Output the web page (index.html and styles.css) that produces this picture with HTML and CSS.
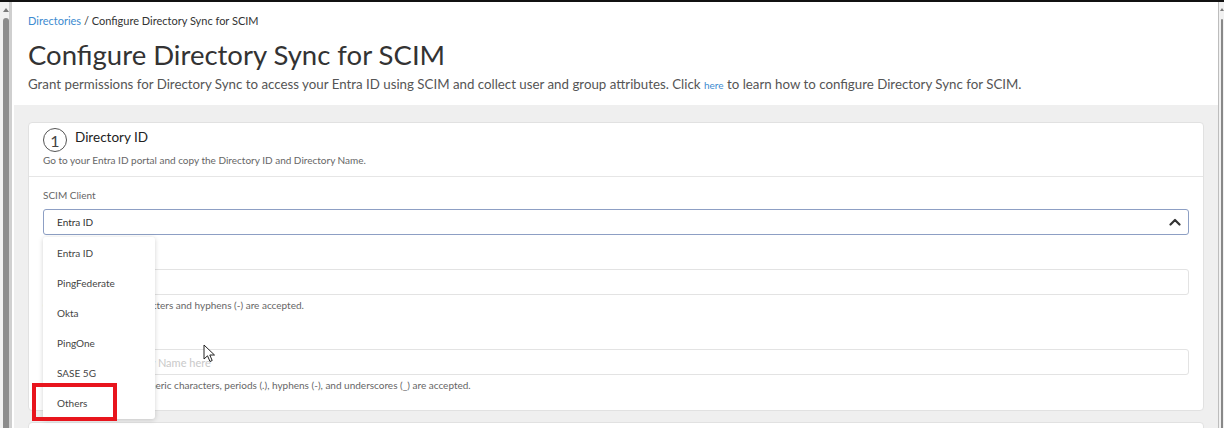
FILE: index.html
```html
<!DOCTYPE html>
<html lang="en">
<head>
  <meta charset="UTF-8" />
  <meta name="viewport" content="width=device-width, initial-scale=1.0" />
  <title>Configure Directory Sync for SCIM</title>
  <link rel="stylesheet" href="styles.css">
</head>
<body>
  <div class="frame">
    <div class="scrollbar left"><span class="arrow"></span><span class="thumb"></span></div>

    <main class="page">
      <div class="page-head">
        <div class="crumbs"><a href="#">Directories</a> / Configure Directory Sync for SCIM</div>
        <h1>Configure Directory Sync for SCIM</h1>
        <p class="lead">Grant permissions for Directory Sync to access your Entra ID using SCIM and collect user and group attributes. Click <a href="#">here</a> to learn how to configure Directory Sync for SCIM.</p>
      </div>

      <div class="content">
        <section class="card">
          <div class="card-head">
            <div class="step-row">
              <span class="step">1</span>
              <h3>Directory ID</h3>
            </div>
            <p class="hint">Go to your Entra ID portal and copy the Directory ID and Directory Name.</p>
          </div>

          <div class="card-body">
            <div class="field">
              <label>SCIM Client</label>
              <div class="select open">
                <span>Entra ID</span>
                <svg class="chev" width="12" height="8" viewBox="0 0 12 8"><polyline points="1.5,6.5 6,2 10.5,6.5" fill="none" stroke="#333" stroke-width="2.2" stroke-linecap="round" stroke-linejoin="round"/></svg>
                <ul class="menu">
                  <li>Entra ID</li>
                  <li>PingFederate</li>
                  <li>Okta</li>
                  <li>PingOne</li>
                  <li>SASE 5G</li>
                  <li class="mark">Others</li>
                </ul>
              </div>
            </div>

            <div class="field">
              <label>Directory ID</label>
              <div class="input"></div>
              <p class="help">Only alphanumeric characters and hyphens (-) are accepted.</p>
            </div>

            <div class="field">
              <label>Directory Name</label>
              <div class="input"><span class="placeholder">Enter your Directory Name here</span></div>
              <p class="help">Please use only alphanumeric characters, periods (.), hyphens (-), and underscores (_) are accepted.</p>
              <svg class="cursor" width="13" height="19" viewBox="0 0 13 19"><path d="M1 1 L1 15 L4.5 11.8 L7 17.5 L9.2 16.5 L6.8 11 L11.5 11 Z" fill="#fff" stroke="#222" stroke-width="1" stroke-linejoin="round"/></svg>
            </div>
          </div>
        </section>

        <section class="card next"></section>
      </div>
    </main>

    <div class="scrollbar right"><span class="arrow"></span><span class="thumb"></span></div>
  </div>
</body>
</html>
```

FILE: styles.css
```css
html, body {
  margin: 0;
  height: 100%;
  overflow: hidden;
}
body {
  font-family: Lato, "Open Sans", sans-serif;
  background: #fff;
  color: #333;
  border-top: 2px solid #111;
  box-sizing: border-box;
}
a {
  color: #3d8bd0;
  text-decoration: none;
}
.frame {
  display: flex;
  height: 100%;
}

/* window scrollbars */
.scrollbar {
  display: flex;
  flex-direction: column;
  align-items: center;
  background: #f1f1f1;
}
.scrollbar.left {
  width: 6px;
  padding-left: 3px;
  border-right: 3px solid #cfcfcf;
}
.scrollbar.right {
  width: 5px;
  border-left: 1px solid #bdbdbd;
}
.arrow {
  width: 0;
  height: 0;
  margin-top: 6px;
  border-left: 3px solid transparent;
  border-right: 3px solid transparent;
  border-bottom: 4px solid #7a7a7a;
}
.scrollbar.right .arrow {
  border-left-width: 2px;
  border-right-width: 2px;
  border-bottom-width: 3px;
}
.thumb {
  flex: 1;
  width: 100%;
  margin-top: 6px;
  background: #8c8c8c;
  border-radius: 3px 3px 0 0;
}
.scrollbar.right .thumb {
  width: 2px;
  margin-top: 8px;
  background: #888;
}

.page {
  flex: 1;
  display: flex;
  flex-direction: column;
  min-width: 0;
}
.page-head {
  padding: 12px 16px 11px;
}
.crumbs {
  font-size: 11px;
  line-height: 14px;
  color: #333;
}
h1 {
  margin: 10px 0 0;
  font-size: 27.5px;
  line-height: 34px;
  font-weight: 400;
  color: #333;
}
.lead {
  margin: 4px 0 0;
  font-size: 13.3px;
  line-height: 17px;
  color: #555;
}
.lead a {
  font-size: 10px;
}

.content {
  flex: 1;
  background: #efefef;
  padding: 17px 14px 0;
  margin-left: 2px;
}
.card {
  background: #fff;
  border: 1px solid #e1e1e1;
  border-radius: 4px;
}
.card.next {
  margin-top: 11px;
  height: 40px;
}
.card-head {
  padding: 5px 14px 9px;
  border-bottom: 1px solid #e6e6e6;
}
.step-row {
  display: flex;
  align-items: flex-start;
  gap: 8px;
}
.step {
  width: 22px;
  height: 22px;
  border: 1.5px solid #555;
  border-radius: 50%;
  display: flex;
  align-items: center;
  justify-content: center;
  font-size: 16px;
  color: #444;
}
h3 {
  margin: 0;
  font-size: 13.5px;
  line-height: 18px;
  font-weight: 400;
  color: #222;
}
.hint {
  margin: 1px 0 0;
  font-size: 10px;
  line-height: 14px;
  color: #666;
}

.card-body {
  padding: 11px 14px 18px;
}
.field {
  position: relative;
  display: flex;
  flex-direction: column;
  margin-bottom: 13px;
}
.field:last-child {
  margin-bottom: 0;
}
.field label {
  font-size: 10px;
  line-height: 14px;
  color: #666;
  margin-bottom: 7px;
}
.select,
.input {
  position: relative;
  height: 26px;
  box-sizing: border-box;
  border: 1px solid #e3e3e3;
  border-radius: 3px;
  display: flex;
  align-items: center;
  padding: 0 13px;
  font-size: 10px;
  color: #333;
}
.select.open {
  border-color: #8d9fc4;
}
.chev {
  margin-left: auto;
  margin-right: -6px;
}
.placeholder {
  font-size: 11px;
  color: #c9c9c9;
}
.help {
  margin: 3px 0 3px;
  font-size: 10px;
  line-height: 14px;
  color: #666;
}
.field:last-child .help {
  margin-bottom: 0;
}

/* open dropdown list */
.menu {
  position: absolute;
  left: -1px;
  top: 27px;
  z-index: 5;
  width: 112px;
  margin: 0;
  padding: 1px 0;
  list-style: none;
  background: #fff;
  border-radius: 3px;
  box-shadow: 0 1px 5px rgba(0,0,0,0.18);
}
.menu li {
  height: 30px;
  line-height: 30px;
  padding-left: 14px;
  font-size: 10px;
  color: #444;
}
.menu li.mark {
  position: relative;
}
.menu li.mark::after {
  content: "";
  position: absolute;
  left: -11px;
  top: -5px;
  width: 77px;
  height: 30px;
  border: 4px solid #e8151d;
}
.cursor {
  position: absolute;
  left: 160px;
  top: 16px;
  z-index: 6;
}
```
